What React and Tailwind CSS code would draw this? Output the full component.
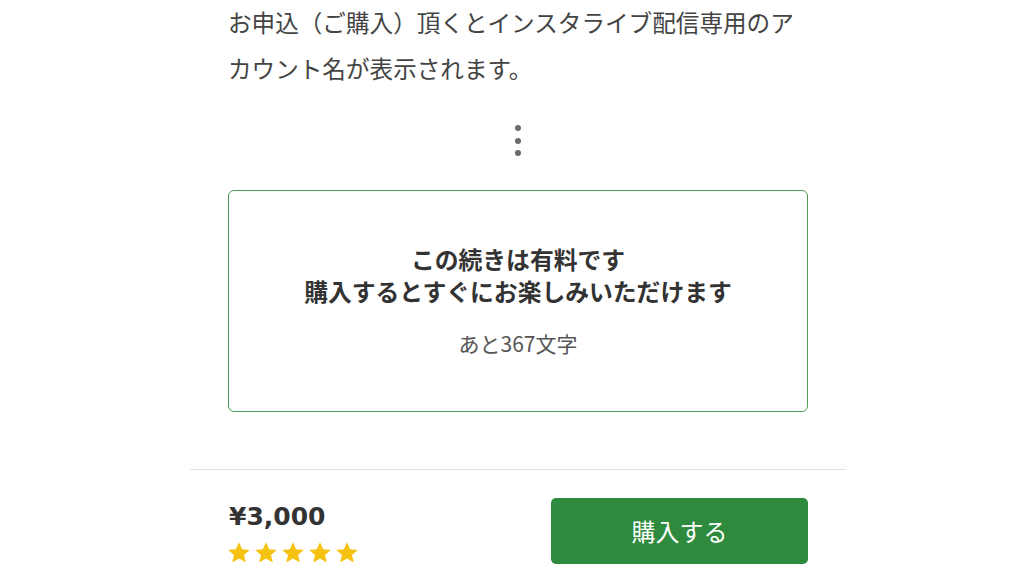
import React from "react";

const Star = () => (
  <svg viewBox="0 0 24 24" className="w-[24px] h-[24px]" fill="#f5c211">
    <path d="M12 1.2l3.2 7 7.6.7-5.8 5.1 1.8 7.5L12 17.6l-6.8 3.9 1.8-7.5-5.8-5.1 7.6-.7z" />
  </svg>
);

const App = () => {
  return (
    <div
      className="w-[1024px] h-[576px] bg-white overflow-hidden"
      style={{ fontFamily: '"Noto Sans CJK JP", "Noto Sans", sans-serif' }}
    >
      <div className="w-[656px] ml-[190px]">
        <div className="px-[38px]">
          <p className="text-[23.6px] leading-[46px] text-[#444] -mt-[1px]">
            お申込（ご購入）頂くとインスタライブ配信専用のアカウント名が表示されます。
          </p>

          <div className="flex flex-col items-center gap-[6.5px] pt-[34px] pb-[34px]">
            <span className="w-[6px] h-[6px] rounded-full bg-[#6b6b6b]" />
            <span className="w-[6px] h-[6px] rounded-full bg-[#6b6b6b]" />
            <span className="w-[6px] h-[6px] rounded-full bg-[#6b6b6b]" />
          </div>

          <div className="h-[222px] border-[1.5px] border-[#4f9d55] rounded-[6px] flex flex-col items-center pt-[52px]">
            <p className="text-[23.8px] leading-[32px] font-bold text-[#333] text-center">
              この続きは有料です
              <br />
              購入するとすぐにお楽しみいただけます
            </p>
            <p className="text-[21px] leading-[28px] text-[#555] mt-[22px]">あと367文字</p>
          </div>
        </div>

        <div className="mt-[57px] border-t border-[#e2e2e2]" />

        <div className="px-[38px] pt-[27px] flex items-start justify-between">
          <div className="flex flex-col">
            <span
              className="text-[25px] leading-[34px] font-bold text-[#333] ml-[1px] mt-[3px]"
              style={{ fontFamily: '"DejaVu Sans", sans-serif' }}
            >
              ¥3,000
            </span>
            <div className="flex gap-[3px] mt-[7px] -ml-[1px]">
              <Star />
              <Star />
              <Star />
              <Star />
              <Star />
            </div>
          </div>
          <button className="w-[257px] h-[66px] bg-[#2e8b3d] rounded-[5px] text-white text-[24px] mt-[1px]">
            購入する
          </button>
        </div>
      </div>
    </div>
  );
};

export default App;
